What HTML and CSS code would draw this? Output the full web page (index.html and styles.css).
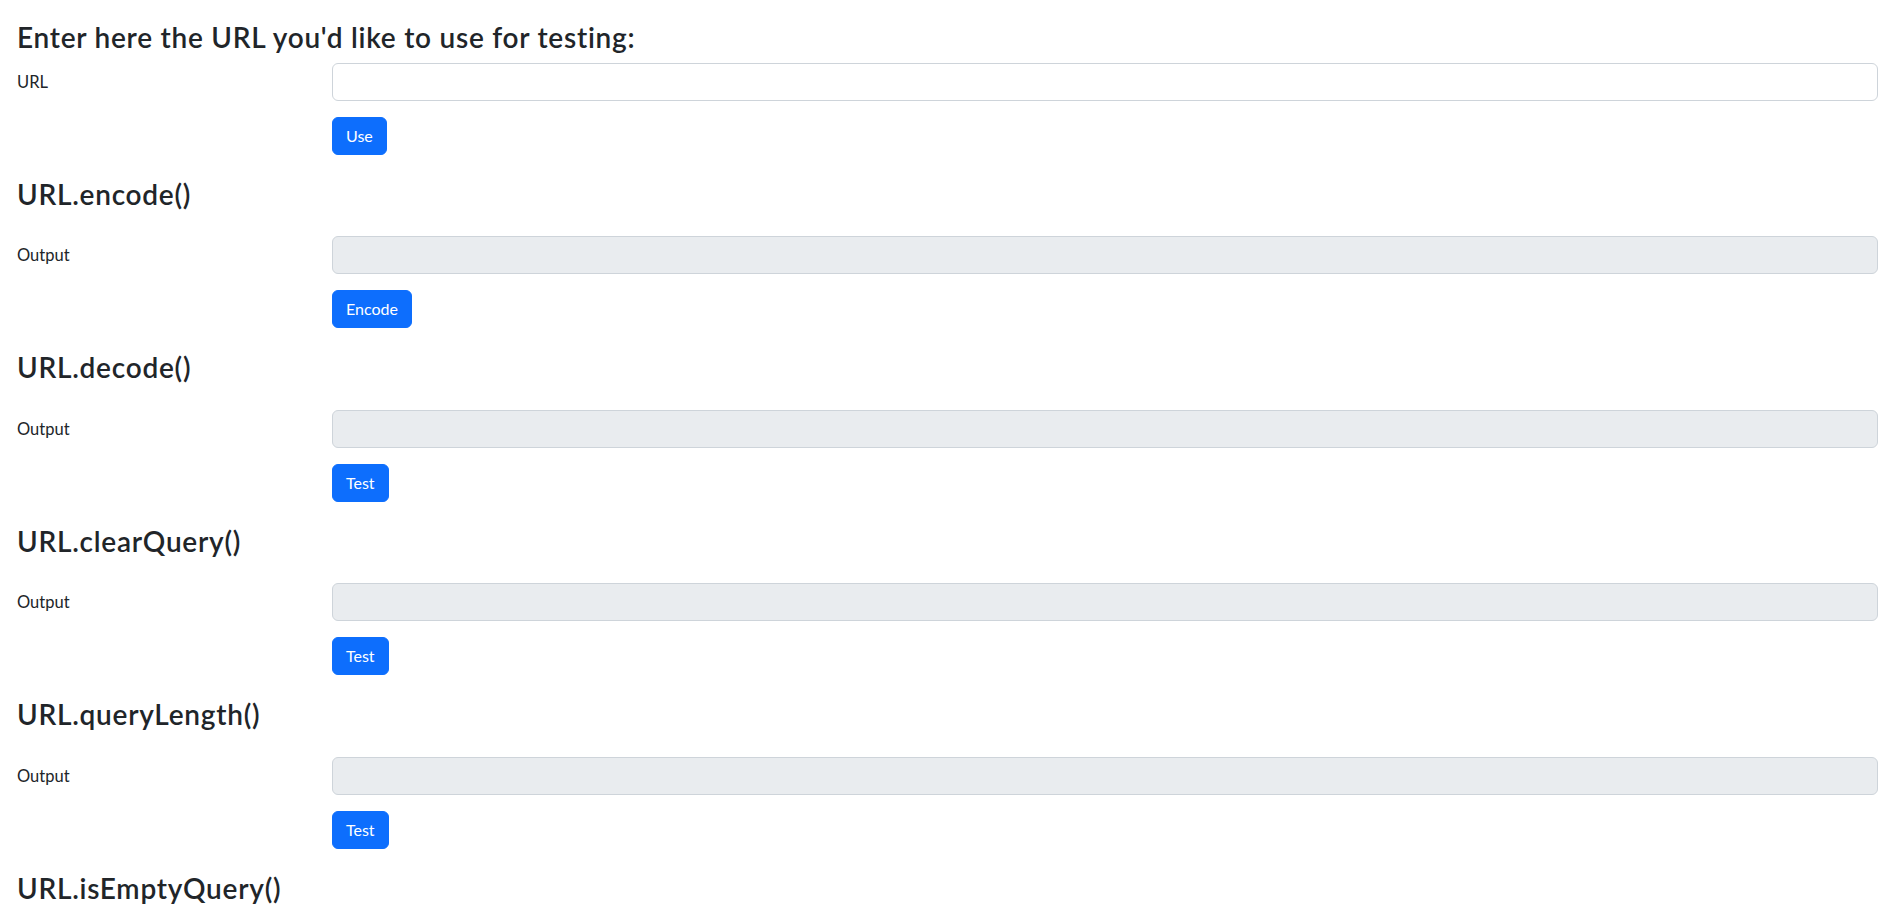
FILE: index.html
```html
<!DOCTYPE html>
<html lang="en">
<head>
<meta charset="utf-8">
<title>URL testing</title>
<link rel="stylesheet" href="styles.css">
</head>
<body>
<main class="page">
  <section class="block">
    <h3 class="block-title">Enter here the URL you'd like to use for testing:</h3>
    <div class="form-row">
      <label class="form-label" for="url">URL</label>
      <input class="form-input" id="url" type="text">
    </div>
    <div class="form-row">
      <span></span>
      <div><button class="btn" type="button">Use</button></div>
    </div>
  </section>

  <section class="block block--spaced">
    <h3 class="block-title">URL.encode()</h3>
    <div class="form-row">
      <label class="form-label" for="o1">Output</label>
      <input class="form-input form-input--readonly" id="o1" type="text" readonly>
    </div>
    <div class="form-row">
      <span></span>
      <div><button class="btn" type="button">Encode</button></div>
    </div>
  </section>

  <section class="block block--spaced">
    <h3 class="block-title">URL.decode()</h3>
    <div class="form-row">
      <label class="form-label" for="o2">Output</label>
      <input class="form-input form-input--readonly" id="o2" type="text" readonly>
    </div>
    <div class="form-row">
      <span></span>
      <div><button class="btn" type="button">Test</button></div>
    </div>
  </section>

  <section class="block block--spaced">
    <h3 class="block-title">URL.clearQuery()</h3>
    <div class="form-row">
      <label class="form-label" for="o3">Output</label>
      <input class="form-input form-input--readonly" id="o3" type="text" readonly>
    </div>
    <div class="form-row">
      <span></span>
      <div><button class="btn" type="button">Test</button></div>
    </div>
  </section>

  <section class="block block--spaced">
    <h3 class="block-title">URL.queryLength()</h3>
    <div class="form-row">
      <label class="form-label" for="o4">Output</label>
      <input class="form-input form-input--readonly" id="o4" type="text" readonly>
    </div>
    <div class="form-row">
      <span></span>
      <div><button class="btn" type="button">Test</button></div>
    </div>
  </section>

  <section class="block block--spaced">
    <h3 class="block-title">URL.isEmptyQuery()</h3>
  </section>
</main>
</body>
</html>
```

FILE: styles.css
```css
* {
  box-sizing: border-box;
}

html, body {
  margin: 0;
  padding: 0;
  background: #fff;
}

body {
  font-family: "Lato", "Liberation Sans", sans-serif;
  font-size: 16px;
  line-height: 1.5;
  color: #212529;
}

.page {
  padding: 21px 12px 0 17px;
}

.block + .block {
  margin-top: 23px;
}

.block-title {
  margin: 0 0 8px;
  font-size: 28px;
  font-weight: 600;
  line-height: 1.2;
  letter-spacing: 0.75px;
  color: #212529;
}

.block--spaced .block-title {
  margin-bottom: 25px;
}

.form-row {
  display: grid;
  grid-template-columns: 315px 1fr;
  margin-bottom: 16px;
}

.form-row:last-child {
  margin-bottom: 0;
}

.form-label {
  padding-top: 7px;
  padding-bottom: 7px;
  font-size: 16.5px;
  line-height: 24px;
}

.form-input {
  display: block;
  width: 100%;
  height: 38px;
  padding: 6px 12px;
  font: inherit;
  color: #212529;
  background: #fff;
  border: 1px solid #ced4da;
  border-radius: 6px;
  outline: none;
}

.form-input--readonly {
  background: #e9ecef;
}

.btn {
  display: inline-block;
  height: 38px;
  padding: 6px 13px;
  font-family: inherit;
  font-size: 16px;
  line-height: 1.5;
  color: #fff;
  background: #0d6efd;
  border: 1px solid #0d6efd;
  border-radius: 6px;
  cursor: pointer;
}
```
